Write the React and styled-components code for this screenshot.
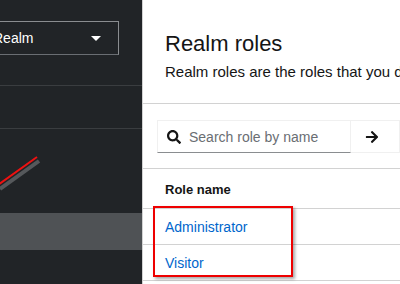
import React from "react";
import styled, { createGlobalStyle } from "styled-components";

const Global = createGlobalStyle`
  html, body { margin: 0; padding: 0; background: #fff; }
  body { font-family: "Liberation Sans", Arial, sans-serif; overflow: hidden; }
`;

const Page = styled.div`
  display: flex;
  width: 400px;
  height: 284px;
  overflow: hidden;
  position: relative;
`;

const Sidebar = styled.aside`
  width: 142px;
  flex: none;
  background: #212427;
  overflow: hidden;
  display: flex;
  flex-direction: column;
`;

const SideTop = styled.div`
  height: 86px;
  box-sizing: border-box;
  padding-top: 21px;
  border-bottom: 1px solid #3a3d40;
`;

const RealmSelect = styled.div`
  margin-left: -20px;
  width: 139px;
  height: 34px;
  box-sizing: border-box;
  border: 1px solid #8a8d90;
  border-bottom-color: #6a6e73;
  display: flex;
  align-items: center;
  justify-content: space-between;
  padding: 0 17px 0 12px;
  color: #fff;
  font-size: 14px;
`;

const Caret = styled.span`
  width: 0;
  height: 0;
  border-left: 5px solid transparent;
  border-right: 5px solid transparent;
  border-top: 5px solid #fff;
`;

const SideSection = styled.div`
  height: ${(p) => p.$h}px;
  flex: none;
  box-sizing: border-box;
  background: ${(p) => (p.$active ? "#4f5255" : "transparent")};
  border-bottom: ${(p) => (p.$line ? "1px solid #3a3d40" : "none")};
`;

const Main = styled.main`
  flex: 1;
  border-left: 1px solid #d2d2d2;
  display: flex;
  flex-direction: column;
  min-width: 0;
`;

const Header = styled.section`
  height: 104px;
  box-sizing: border-box;
  padding: 30px 0 0 22px;
  border-bottom: 1px solid #d2d2d2;
  white-space: nowrap;
`;

const Title = styled.h1`
  margin: 0;
  font-size: 22px;
  font-weight: 400;
  color: #151515;
  line-height: 28px;
`;

const Subtitle = styled.p`
  margin: 4px 0 0;
  font-size: 15px;
  color: #151515;
  line-height: 20px;
`;

const Toolbar = styled.div`
  height: 65px;
  box-sizing: border-box;
  padding: 16px 0 0 14px;
  border-bottom: 1px solid #d2d2d2;
  display: flex;
  align-items: flex-start;
`;

const SearchField = styled.div`
  width: 198px;
  height: 33px;
  box-sizing: border-box;
  border: 1px solid #f0f0f0;
  border-bottom-color: #8a8d90;
  display: flex;
  align-items: center;
  gap: 8px;
  padding-left: 9px;
  color: #6a6e73;
  font-size: 14px;
`;

const SearchButton = styled.div`
  width: 50px;
  height: 33px;
  box-sizing: border-box;
  border: 1px solid #f0f0f0;
  border-left: none;
  display: flex;
  align-items: center;
  padding-left: 14px;
`;

const Table = styled.div`
  display: flex;
  flex-direction: column;
`;

const HeadRow = styled.div`
  height: 40px;
  box-sizing: border-box;
  padding: 2px 0 0 22px;
  display: flex;
  align-items: center;
  border-bottom: 1px solid #d2d2d2;
  font-size: 13px;
  font-weight: 700;
  color: #151515;
`;

const Body = styled.div`
  position: relative;
`;

const Row = styled.div`
  height: 36px;
  box-sizing: border-box;
  padding-left: 22px;
  display: flex;
  align-items: center;
  border-bottom: 1px solid #d2d2d2;
`;

const RoleLink = styled.a`
  color: #0066cc;
  font-size: 14px;
  text-decoration: none;
`;

const Highlight = styled.div`
  position: absolute;
  left: 10px;
  top: -3px;
  width: 140px;
  height: 71px;
  box-sizing: border-box;
  border: 2px solid #ee0000;
  box-shadow: 2px 2px 3px rgba(0, 0, 0, 0.35);
  pointer-events: none;
`;

const Arrow = styled.svg`
  position: absolute;
  left: 0;
  top: 150px;
`;

export default function App() {
  return (
    <>
      <Global />
      <Page>
        <Sidebar>
          <SideTop>
            <RealmSelect>
              <span>Realm</span>
              <Caret />
            </RealmSelect>
          </SideTop>
          <SideSection $h={43} $line />
          <SideSection $h={84} />
          <SideSection $h={37} $active />
        </Sidebar>
        <Main>
          <Header>
            <Title>Realm roles</Title>
            <Subtitle>Realm roles are the roles that you define for use in the current realm.</Subtitle>
          </Header>
          <Toolbar>
            <SearchField>
              <svg width="14" height="14" viewBox="0 0 512 512">
                <path
                  fill="#151515"
                  d="M505 442.7L405.3 343c-4.5-4.5-10.6-7-17-7H372c27.6-35.3 44-79.7 44-128C416 93.1 322.9 0 208 0S0 93.1 0 208s93.1 208 208 208c48.3 0 92.7-16.4 128-44v16.3c0 6.4 2.5 12.5 7 17l99.7 99.7c9.4 9.4 24.6 9.4 33.9 0l28.3-28.3c9.4-9.4 9.4-24.6.1-34zM208 336c-70.7 0-128-57.2-128-128 0-70.7 57.2-128 128-128 70.7 0 128 57.2 128 128 0 70.7-57.2 128-128 128z"
                />
              </svg>
              <span>Search role by name</span>
            </SearchField>
            <SearchButton>
              <svg width="14" height="14" viewBox="0 0 448 512">
                <path
                  fill="#151515"
                  d="M190.5 66.9l22.2-22.2c9.4-9.4 24.6-9.4 33.9 0L441 239c9.4 9.4 9.4 24.6 0 33.9L246.6 467.3c-9.4 9.4-24.6 9.4-33.9 0l-22.2-22.2c-9.500-9.5-9.3-25 .4-34.3L311.4 296H24c-13.3 0-24-10.7-24-24v-32c0-13.3 10.7-24 24-24h287.4L190.9 101.2c-9.8-9.3-10-24.8-.4-34.3z"
                />
              </svg>
            </SearchButton>
          </Toolbar>
          <Table>
            <HeadRow>Role name</HeadRow>
            <Body>
              <Row>
                <RoleLink href="#">Administrator</RoleLink>
              </Row>
              <Row>
                <RoleLink href="#">Visitor</RoleLink>
              </Row>
              <Highlight />
            </Body>
          </Table>
        </Main>
        <Arrow width="50" height="45" viewBox="0 0 50 45">
          <line x1="-2" y1="36" x2="37" y2="8" stroke="#55585b" strokeWidth="4" transform="translate(2 3)" />
          <line x1="-2" y1="35" x2="37" y2="7" stroke="#ee1111" strokeWidth="2" />
        </Arrow>
      </Page>
    </>
  );
}
